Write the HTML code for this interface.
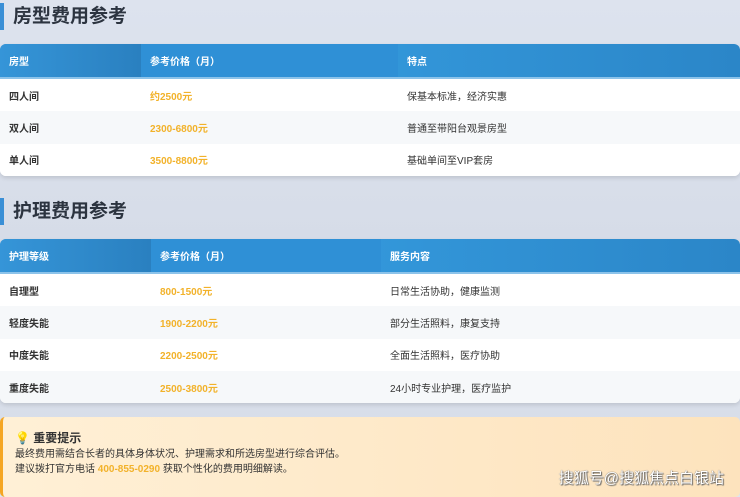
<!DOCTYPE html>
<html><head><meta charset="utf-8"><style>
*{margin:0;padding:0;box-sizing:border-box}
body{width:740px;height:495px;overflow:hidden;background:linear-gradient(180deg,#dde3ee,#d6dce8 50%,#d9dfea);font-family:"Liberation Sans","Noto Sans CJK SC",sans-serif;position:relative}
h2{position:absolute;left:0;font-size:19px;font-weight:bold;color:#2c3440;padding-left:9px;border-left:4px solid #3a8fd6;line-height:27px}
.t{position:absolute;left:0;width:740px;background:#fff;border-radius:6px;overflow:hidden;box-shadow:0 2px 4px rgba(0,0,0,.12)}
.r{display:flex;height:32.3px;align-items:center;font-size:10px;color:#333;font-weight:bold}
.r div{padding-left:9px}
.r div:nth-child(2){color:#f2b22a}
.r div:nth-child(3){font-weight:normal;color:#333}
.r.h{height:35px;background:linear-gradient(90deg,#2f8fd4,#3397da 50%,#2b86c8);border-bottom:2px solid #8cc3ea}
.r.h div{color:#fff;font-weight:bold;height:100%;display:flex;align-items:center}
.r.h div:first-child{background:linear-gradient(90deg,#3595d8,#2a80c0)}
.tip{position:absolute;left:0;top:417px;width:740px;height:80px;background:linear-gradient(90deg,#fff0d6,#fde3bd);border-left:3px solid #f5a623;border-radius:5px;padding:14px 0 0 12px;font-size:10px;color:#333;line-height:14px}
</style></head><body>
<h2 style="top:3px">房型费用参考</h2>
<div class="t" style="top:44px">
<div class="r h"><div style="width:141px">房型</div><div style="width:257px;background:#2f90d6">参考价格（月）</div><div>特点</div></div>
<div class="r" style="background:#fff"><div style="width:141px">四人间</div><div style="width:257px">约2500元</div><div>保基本标准，经济实惠</div></div>
<div class="r" style="background:#f6f8fa"><div style="width:141px">双人间</div><div style="width:257px">2300-6800元</div><div>普通至带阳台观景房型</div></div>
<div class="r" style="background:#fff"><div style="width:141px">单人间</div><div style="width:257px">3500-8800元</div><div>基础单间至VIP套房</div></div>
</div>
<h2 style="top:198px">护理费用参考</h2>
<div class="t" style="top:239px">
<div class="r h"><div style="width:151px">护理等级</div><div style="width:230px;background:#2f90d6">参考价格（月）</div><div>服务内容</div></div>
<div class="r" style="background:#fff"><div style="width:151px">自理型</div><div style="width:230px">800-1500元</div><div>日常生活协助，健康监测</div></div>
<div class="r" style="background:#f6f8fa"><div style="width:151px">轻度失能</div><div style="width:230px">1900-2200元</div><div>部分生活照料，康复支持</div></div>
<div class="r" style="background:#fff"><div style="width:151px">中度失能</div><div style="width:230px">2200-2500元</div><div>全面生活照料，医疗协助</div></div>
<div class="r" style="background:#f6f8fa"><div style="width:151px">重度失能</div><div style="width:230px">2500-3800元</div><div>24小时专业护理，医疗监护</div></div>
</div>
<div class="tip">
<div style="font-size:12px;font-weight:bold;margin-bottom:3px"><span style="color:#f2b22a">💡</span> 重要提示</div>
<div>最终费用需结合长者的具体身体状况、护理需求和所选房型进行综合评估。</div>
<div style="margin-top:1px">建议拨打官方电话 <b style="color:#f2b22a">400-855-0290</b> 获取个性化的费用明细解读。</div>
</div>
<div style="position:absolute;right:16px;top:467px;font-size:15px;color:#fff;text-shadow:0 0 1px #444,1px 1px 1px #666">搜狐号@搜狐焦点白银站</div>
</body></html>
